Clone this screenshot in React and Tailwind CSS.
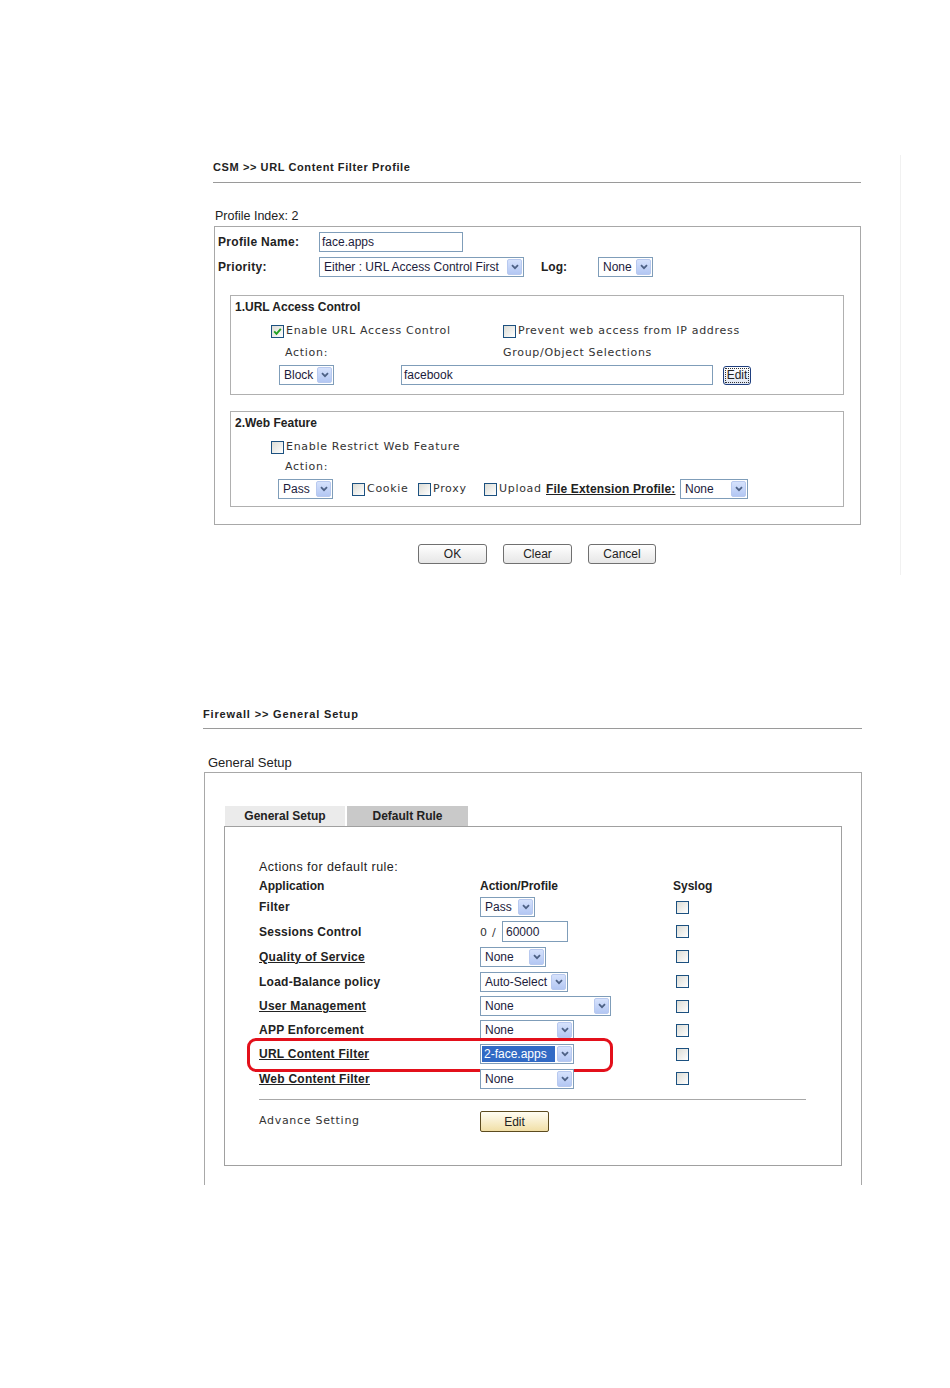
const verdana = "font-['DejaVu_Sans',Verdana,sans-serif] text-[11px] tracking-[0.7px] text-[#333]";

function Arrow() {
  return (
    <span className="ml-auto mr-px flex h-[16px] w-[15px] shrink-0 items-center justify-center rounded-[2px] border border-[#b8c9ef] bg-linear-to-b from-[#d6e2fc] to-[#b3c7f3]">
      <svg width="8" height="6" viewBox="0 0 8 6">
        <path d="M1 1.2 L4 4.2 L7 1.2" fill="none" stroke="#4d6185" strokeWidth="1.8" />
      </svg>
    </span>
  );
}

function Select({ w, value, hl }) {
  return (
    <div className={`flex h-[20px] shrink-0 items-center border border-[#7f9db9] bg-white text-[12px] ${w}`}>
      {hl ? (
        <span className="ml-px w-[73px] bg-[#316ac5] px-[2px] leading-[16px] text-white">{value}</span>
      ) : (
        <span className="pl-[4px] text-[#1c1c3c]">{value}</span>
      )}
      <Arrow />
    </div>
  );
}

function Input({ w, value }) {
  return (
    <div className={`flex h-[20px] shrink-0 items-center border border-[#7f9db9] bg-white pl-[2px] text-[12px] text-[#1c1c3c] ${w}`}>
      {value}
    </div>
  );
}

function Box({ checked }) {
  return (
    <span className="flex h-[13px] w-[13px] shrink-0 items-center justify-center border border-[#1c5180] bg-linear-to-br from-[#dcdcd5] to-white">
      {checked && (
        <svg width="9" height="9" viewBox="0 0 9 9">
          <path d="M1.2 4.4 L3.5 6.8 L7.8 1.8" fill="none" stroke="#21a121" strokeWidth="1.9" />
        </svg>
      )}
    </span>
  );
}

function Btn({ w, children }) {
  return (
    <div className={`flex h-[20px] items-center justify-center rounded-[3px] border border-[#707070] bg-linear-to-b from-white to-[#e6e6e6] text-[12px] text-[#222] ${w}`}>
      {children}
    </div>
  );
}

const rows = [
  { label: "Filter", h: "h-[24px]", ctrl: <Select w="w-[55px]" value="Pass" /> },
  {
    label: "Sessions Control",
    h: "h-[25px]",
    ctrl: (
      <div className="flex items-center">
        <span className={`${verdana} mt-[3px] w-[22px]`}>0 /</span>
        <div className="flex h-[21px] w-[66px] items-center border border-[#7f9db9] pl-[3px] text-[12px] text-[#1c1c3c]">60000</div>
      </div>
    ),
  },
  { label: "Quality of Service", link: true, h: "h-[25px]", ctrl: <Select w="w-[66px]" value="None" /> },
  { label: "Load-Balance policy", h: "h-[25px]", ctrl: <Select w="w-[88px]" value="Auto-Select" /> },
  { label: "User Management", link: true, h: "h-[24px]", ctrl: <Select w="w-[131px]" value="None" /> },
  { label: "APP Enforcement", h: "h-[24px]", ctrl: <Select w="w-[94px]" value="None" /> },
  { label: "URL Content Filter", link: true, mark: true, h: "h-[24px]", ctrl: <Select w="w-[94px]" value="2-face.apps" hl /> },
  { label: "Web Content Filter", link: true, h: "h-[25px]", ctrl: <Select w="w-[94px]" value="None" /> },
];

export default function App() {
  return (
    <div className="h-[1388px] w-[950px] bg-white pt-[155px] font-['Liberation_Sans',Arial,sans-serif] text-[#222]">
      {/* CSM >> URL Content Filter Profile */}
      <div className="ml-[213px] h-[420px] w-[688px] border-r border-[#f1f1f1] pt-[5px]">
        <div className="w-[648px]">
          <div className="border-b border-[#9a9a9a] pb-[8px] text-[11px] font-bold leading-[14px] tracking-[0.6px]">CSM &gt;&gt; URL Content Filter Profile</div>
          <div className="ml-[2px] mt-[26px] text-[12.5px] leading-[14px]">Profile Index: 2</div>

          <div className="ml-px mt-[3px] w-[647px] border border-[#a8a8a8] pb-[17px]">
            <div className="mt-[5px] flex h-[20px] items-center pl-[3px] text-[12px]">
              <span className="w-[101px] font-bold tracking-[0.3px]">Profile Name:</span>
              <Input w="w-[144px]" value="face.apps" />
            </div>
            <div className="mt-[5px] flex h-[20px] items-center pl-[3px] text-[12px]">
              <span className="w-[101px] font-bold tracking-[0.3px]">Priority:</span>
              <Select w="w-[205px]" value="Either : URL Access Control First" />
              <span className="ml-[17px] w-[57px] font-bold">Log:</span>
              <Select w="w-[55px]" value="None" />
            </div>

            <div className="ml-[15px] mt-[18px] w-[614px] border border-[#b0b0b0] pb-[9px]">
              <div className="mt-[4px] h-[14px] pl-[4px] text-[12px] font-bold leading-[14px]">1.URL Access Control</div>
              <div className="mt-[10px] flex h-[14px] items-center pl-[40px]">
                <div className="flex w-[232px] items-center gap-[2px]">
                  <Box checked />
                  <span className={verdana}>Enable URL Access Control</span>
                </div>
                <div className="flex items-center gap-[2px]">
                  <Box />
                  <span className={verdana}>Prevent web access from IP address</span>
                </div>
              </div>
              <div className="mt-[8px] flex h-[14px] items-center pl-[54px]">
                <span className={`${verdana} w-[218px]`}>Action:</span>
                <span className={verdana}>Group/Object Selections</span>
              </div>
              <div className="mt-[5px] flex h-[20px] items-center pl-[48px]">
                <Select w="w-[55px]" value="Block" />
                <div className="ml-[67px]">
                  <Input w="w-[312px]" value="facebook" />
                </div>
                <div className="ml-[10px] flex h-[19px] w-[28px] items-center justify-center rounded-[3px] border border-[#1f3f7f] bg-linear-to-b from-white to-[#dfe6f3]">
                  <span className="border border-dotted border-[#333] px-px text-[12px] leading-[13px]">Edit</span>
                </div>
              </div>
            </div>

            <div className="ml-[15px] mt-[16px] w-[614px] border border-[#b0b0b0] pb-[7px]">
              <div className="mt-[4px] h-[14px] pl-[4px] text-[12px] font-bold leading-[14px]">2.Web Feature</div>
              <div className="mt-[10px] flex h-[14px] items-center gap-[2px] pl-[40px]">
                <Box />
                <span className={verdana}>Enable Restrict Web Feature</span>
              </div>
              <div className="mt-[6px] flex h-[14px] items-center pl-[54px]">
                <span className={verdana}>Action:</span>
              </div>
              <div className="mt-[5px] flex h-[20px] items-center pl-[47px]">
                <Select w="w-[55px]" value="Pass" />
                <div className="ml-[19px] flex w-[66px] items-center gap-[2px]">
                  <Box />
                  <span className={verdana}>Cookie</span>
                </div>
                <div className="flex w-[66px] items-center gap-[2px]">
                  <Box />
                  <span className={verdana}>Proxy</span>
                </div>
                <div className="flex w-[62px] items-center gap-[2px]">
                  <Box />
                  <span className={verdana}>Upload</span>
                </div>
                <span className="w-[134px] text-[12px] font-bold tracking-[0.15px] underline">File Extension Profile:</span>
                <Select w="w-[68px]" value="None" />
              </div>
            </div>
          </div>

          <div className="mt-[19px] flex justify-center gap-[16px]">
            <Btn w="w-[69px]">OK</Btn>
            <Btn w="w-[69px]">Clear</Btn>
            <Btn w="w-[68px]">Cancel</Btn>
          </div>
        </div>
      </div>

      {/* Firewall >> General Setup */}
      <div className="ml-[203px] mt-[132px] w-[659px]">
        <div className="border-b border-[#9a9a9a] pb-[7px] text-[11px] font-bold leading-[14px] tracking-[0.85px]">Firewall &gt;&gt; General Setup</div>
        <div className="ml-[5px] mt-[26px] text-[13px] leading-[16px]">General Setup</div>

        <div className="ml-px mt-px w-[658px] border-l border-r border-t border-[#a8a8a8] pb-[19px] pl-[19px] pt-[33px]">
          <div className="ml-px flex h-[20px] gap-[2px] text-[12px] font-bold">
            <div className="flex w-[120px] items-center justify-center bg-[#ebebeb]">General Setup</div>
            <div className="flex w-[121px] items-center justify-center bg-[#c9c9c9]">Default Rule</div>
          </div>

          <div className="w-[618px] border border-[#a0a0a0] pb-[33px] pl-[34px] pt-[33px]">
            <div className="h-[14px] text-[12.5px] leading-[14px] tracking-[0.45px]">Actions for default rule:</div>
            <div className="mt-[5px] flex h-[14px] items-center text-[12px] font-bold">
              <span className="w-[221px]">Application</span>
              <span className="w-[193px]">Action/Profile</span>
              <span>Syslog</span>
            </div>
            <div className="mt-[2px]">
              {rows.map((r) => (
                <div key={r.label} className={`relative flex items-center ${r.h}`}>
                  {r.mark && (
                    <span className="pointer-events-none absolute -left-[12px] -top-[4px] h-[34px] w-[366px] rounded-[9px] border-[3px] border-[#e3101b]" />
                  )}
                  <span className={`w-[221px] text-[12px] font-bold tracking-[0.25px] ${r.link ? "underline" : ""}`}>{r.label}</span>
                  <div className="w-[196px]">{r.ctrl}</div>
                  <Box />
                </div>
              ))}
            </div>
            <div className="mt-[8px] w-[547px] border-t border-[#a8a8a8]" />
            <div className="mt-[11px] flex h-[21px] items-center">
              <span className={`${verdana} w-[221px]`}>Advance Setting</span>
              <div className="flex h-[21px] w-[69px] items-center justify-center rounded-[2px] border border-[#5c4b1f] bg-linear-to-b from-[#fffdf3] to-[#f1dfa6] text-[12px]">
                Edit
              </div>
            </div>
          </div>
        </div>
      </div>
    </div>
  );
}
